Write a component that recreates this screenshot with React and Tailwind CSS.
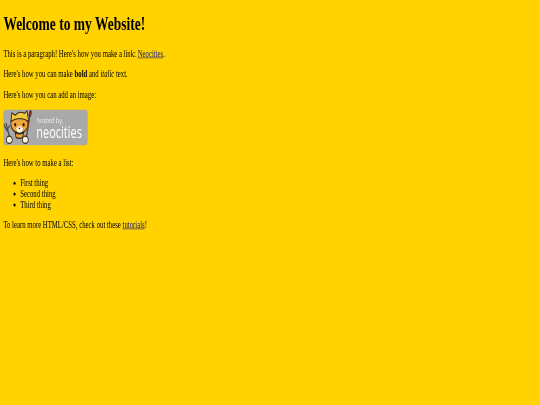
function Badge() {
  return (
    <div className="relative mb-5 h-[59px] w-[200px] overflow-hidden rounded-[7px] bg-[#a9a9a9]">
      <svg viewBox="0 0 80 59" className="absolute left-0 top-0 h-[59px] w-[80px]">
        {/* fork and left paw */}
        <path d="M6 22 L14 44" stroke="#4a4a4a" strokeWidth="3" fill="none" />
        <path d="M1 24 L8 34 L15 26" stroke="#4a4a4a" strokeWidth="2.5" fill="none" />
        <ellipse cx="14" cy="50" rx="7" ry="6" fill="#f7f3e4" stroke="#33281c" strokeWidth="2" />
        {/* head */}
        <path d="M18 20 Q20 12 38 10 Q56 12 58 22 Q60 30 50 36 Q38 40 26 36 Q16 30 18 20 Z" fill="#eda43a" stroke="#33281c" strokeWidth="2" />
        <path d="M28 38 Q38 42 48 38 L46 46 Q38 49 30 46 Z" fill="#eda43a" stroke="#33281c" strokeWidth="2" />
        {/* helmet */}
        <path d="M18 19 L20 5 L28 9 Q38 1 50 6 L56 2 L60 19 Q38 10 18 19 Z" fill="#f2c83c" stroke="#33281c" strokeWidth="2" />
        {/* face */}
        <path d="M31 31 Q38 23 46 31 Q46 38 38 38 Q31 38 31 31 Z" fill="#fdfaf0" />
        <ellipse cx="28" cy="25" rx="2.5" ry="3" fill="#1d1a16" />
        <ellipse cx="48" cy="25" rx="2.5" ry="3" fill="#1d1a16" />
        <path d="M35 30 L41 30 L38 33 Z" fill="#1d1a16" />
        {/* brush and right paw */}
        <path d="M63 8 L55 44" stroke="#6b3b1e" strokeWidth="3" />
        <path d="M65 0 Q68 7 63 12 Q58 8 65 0 Z" fill="#b3261e" stroke="#33281c" strokeWidth="1.5" />
        <ellipse cx="52" cy="50" rx="7" ry="6" fill="#f7f3e4" stroke="#33281c" strokeWidth="2" />
      </svg>
      <span className="absolute left-[79px] top-[11px] font-['Open_Sans',sans-serif] text-[13px] leading-[13px] text-[#eeeeee]">hosted by,</span>
      <span className="absolute left-[78px] top-[24px] font-['Open_Sans',sans-serif] text-[26px] leading-[26px] text-white">neocities</span>
    </div>
  );
}

export default function App() {
  return (
    <div className="h-[405px] w-[540px] overflow-hidden bg-[#ffd200]">
      <div className="h-[675px] w-[1280px] origin-top-left scale-x-[0.4219] scale-y-[0.6] px-2 font-['Liberation_Serif',serif] text-base leading-[18px] text-black blur-[0.4px]">
        <h1 className="pt-[21px] pb-[7px] text-[32px] leading-[37px] font-bold">Welcome to my Website!</h1>
        <p className="my-4">This is a paragraph! Here's how you make a link: <a href="#" className="text-[#1a1a7a] underline">Neocities</a>.</p>
        <p className="my-4">Here's how you can make <strong>bold</strong> and <em>italic</em> text.</p>
        <p className="my-4">Here's how you can add an image:</p>
        <Badge />
        <p className="my-4">Here's how to make a list:</p>
        <ul className="my-4 list-disc pl-10">
          <li>First thing</li>
          <li>Second thing</li>
          <li>Third thing</li>
        </ul>
        <p className="my-4">To learn more HTML/CSS, check out these <a href="#" className="text-[#1a1a7a] underline">tutorials</a>!</p>
      </div>
    </div>
  );
}
